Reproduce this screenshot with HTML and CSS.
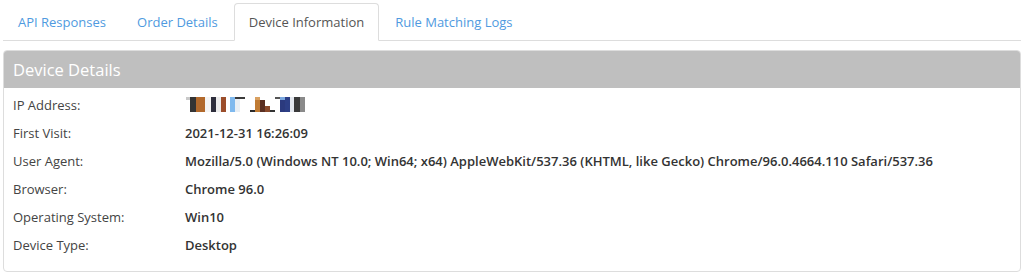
FILE: index.html
```html
<!DOCTYPE html>
<html>
<head>
<meta charset="utf-8">
<link rel="stylesheet" href="styles.css">
</head>
<body>
<ul class="tabs">
  <li class="tab"><a>API Responses</a></li>
  <li class="tab"><a>Order Details</a></li>
  <li class="tab active"><a>Device Information</a></li>
  <li class="tab"><a>Rule Matching Logs</a></li>
</ul>
<div class="panel">
  <div class="panel-heading">Device Details</div>
  <div class="panel-body">
    <div class="label">IP Address:</div>
    <div class="value">
      <svg class="redacted" width="120" height="16" viewBox="0 0 120 16" aria-label="redacted IP address">
        <rect x="0" y="0" width="4" height="3" fill="#c9c9c9"/>
        <rect x="4" y="0" width="6" height="15" fill="#343434"/>
        <rect x="10" y="0" width="9" height="15" fill="#b2692c"/>
        <rect x="19" y="0" width="6" height="15" fill="#f4f4f4"/>
        <rect x="25" y="0" width="5" height="15" fill="#2e2e3c"/>
        <rect x="30" y="0" width="5" height="15" fill="#ececec"/>
        <rect x="35" y="0" width="5" height="15" fill="#9b4d2a"/>
        <rect x="44" y="0" width="5" height="15" fill="#7fb9ee"/>
        <rect x="49" y="0" width="5" height="15" fill="#e8eef4"/>
        <rect x="49" y="0" width="10" height="2" fill="#3a3a3a"/>
        <rect x="64" y="13" width="5" height="2" fill="#2a2a2a"/>
        <rect x="69" y="0" width="5" height="3" fill="#d9a060"/>
        <rect x="69" y="3" width="5" height="12" fill="#c07b34"/>
        <rect x="74" y="3" width="5" height="12" fill="#5a2f22"/>
        <rect x="79" y="9" width="5" height="6" fill="#8a4a2c"/>
        <rect x="84" y="13" width="5" height="2" fill="#333"/>
        <rect x="89" y="0" width="5" height="2" fill="#555"/>
        <rect x="94" y="0" width="5" height="3" fill="#7aa8e0"/>
        <rect x="94" y="3" width="5" height="12" fill="#2b3a7e"/>
        <rect x="99" y="0" width="5" height="15" fill="#2d3f86"/>
        <rect x="104" y="0" width="4" height="15" fill="#e4e8ef"/>
        <rect x="108" y="0" width="6" height="15" fill="#3a3a3a"/>
        <rect x="114" y="0" width="5" height="15" fill="#8a8a8a"/>
      </svg>
    </div>
    <div class="label">First Visit:</div>
    <div class="value">2021-12-31 16:26:09</div>
    <div class="label">User Agent:</div>
    <div class="value">Mozilla/5.0 (Windows NT 10.0; Win64; x64) AppleWebKit/537.36 (KHTML, like Gecko) Chrome/96.0.4664.110 Safari/537.36</div>
    <div class="label">Browser:</div>
    <div class="value">Chrome 96.0</div>
    <div class="label">Operating System:</div>
    <div class="value">Win10</div>
    <div class="label">Device Type:</div>
    <div class="value">Desktop</div>
  </div>
</div>
</body>
</html>
```
FILE: styles.css
```css
* { box-sizing: border-box; }
html, body { background: #fff; }
body {
  margin: 0;
  padding: 3px 3px 0;
  font-family: "Open Sans", "Liberation Sans", sans-serif;
  font-size: 13px;
  line-height: 20px;
  color: #333;
}
.tabs {
  list-style: none;
  margin: 0;
  padding: 0;
  display: flex;
  border-bottom: 1px solid #dddddd;
}
.tab {
  margin-right: 1px;
  margin-bottom: -1px;
}
.tab a {
  display: block;
  padding: 8px 14px;
  border: 1px solid transparent;
  border-radius: 4px 4px 0 0;
  color: #4f9ae0;
  cursor: pointer;
}
.tab.active a {
  color: #555;
  background: #fff;
  border-color: #dddddd #dddddd transparent;
}
.panel {
  margin-top: 9px;
  border: 1px solid #dddddd;
  border-radius: 4px;
  overflow: hidden;
}
.panel-heading {
  background: #bfbfbf;
  color: #fff;
  font-size: 16.5px;
  line-height: 37px;
  padding: 0 9px;
}
.panel-body {
  display: grid;
  grid-template-columns: 172px 1fr;
  grid-auto-rows: 28px;
  align-items: center;
  padding: 3px 9px 12px;
}
.label {
  color: #444;
}
.value {
  font-weight: 600;
  color: #333;
  white-space: nowrap;
}
.redacted { display: block; margin-left: 1px; }
```
